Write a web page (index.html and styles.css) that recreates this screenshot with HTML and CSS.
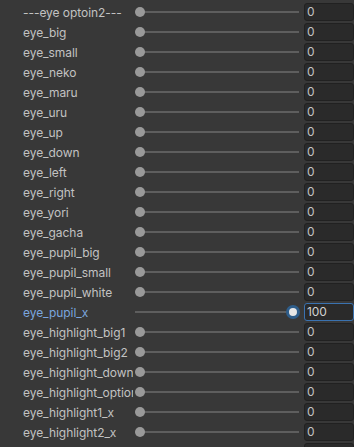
FILE: index.html
```html
<!DOCTYPE html>
<html>
<head>
<meta charset="utf-8">
<link rel="stylesheet" href="styles.css">
</head>
<body>
<div class="list">
  <div class="row"><span class="label">---eye optoin2---</span><div class="slider"><span class="track"></span><span class="knob"></span></div><div class="field">0</div></div>
  <div class="row"><span class="label">eye_big</span><div class="slider"><span class="track"></span><span class="knob"></span></div><div class="field">0</div></div>
  <div class="row"><span class="label">eye_small</span><div class="slider"><span class="track"></span><span class="knob"></span></div><div class="field">0</div></div>
  <div class="row"><span class="label">eye_neko</span><div class="slider"><span class="track"></span><span class="knob"></span></div><div class="field">0</div></div>
  <div class="row"><span class="label">eye_maru</span><div class="slider"><span class="track"></span><span class="knob"></span></div><div class="field">0</div></div>
  <div class="row"><span class="label">eye_uru</span><div class="slider"><span class="track"></span><span class="knob"></span></div><div class="field">0</div></div>
  <div class="row"><span class="label">eye_up</span><div class="slider"><span class="track"></span><span class="knob"></span></div><div class="field">0</div></div>
  <div class="row"><span class="label">eye_down</span><div class="slider"><span class="track"></span><span class="knob"></span></div><div class="field">0</div></div>
  <div class="row"><span class="label">eye_left</span><div class="slider"><span class="track"></span><span class="knob"></span></div><div class="field">0</div></div>
  <div class="row"><span class="label">eye_right</span><div class="slider"><span class="track"></span><span class="knob"></span></div><div class="field">0</div></div>
  <div class="row"><span class="label">eye_yori</span><div class="slider"><span class="track"></span><span class="knob"></span></div><div class="field">0</div></div>
  <div class="row"><span class="label">eye_gacha</span><div class="slider"><span class="track"></span><span class="knob"></span></div><div class="field">0</div></div>
  <div class="row"><span class="label">eye_pupil_big</span><div class="slider"><span class="track"></span><span class="knob"></span></div><div class="field">0</div></div>
  <div class="row"><span class="label">eye_pupil_small</span><div class="slider"><span class="track"></span><span class="knob"></span></div><div class="field">0</div></div>
  <div class="row"><span class="label">eye_pupil_white</span><div class="slider"><span class="track"></span><span class="knob"></span></div><div class="field">0</div></div>
  <div class="row active"><span class="label">eye_pupil_x</span><div class="slider max"><span class="track"></span><span class="knob"></span></div><div class="field">100</div></div>
  <div class="row"><span class="label">eye_highlight_big1</span><div class="slider"><span class="track"></span><span class="knob"></span></div><div class="field">0</div></div>
  <div class="row"><span class="label">eye_highlight_big2</span><div class="slider"><span class="track"></span><span class="knob"></span></div><div class="field">0</div></div>
  <div class="row"><span class="label">eye_highlight_down</span><div class="slider"><span class="track"></span><span class="knob"></span></div><div class="field">0</div></div>
  <div class="row"><span class="label">eye_highlight_option</span><div class="slider"><span class="track"></span><span class="knob"></span></div><div class="field">0</div></div>
  <div class="row"><span class="label">eye_highlight1_x</span><div class="slider"><span class="track"></span><span class="knob"></span></div><div class="field">0</div></div>
  <div class="row"><span class="label">eye_highlight2_x</span><div class="slider"><span class="track"></span><span class="knob"></span></div><div class="field">0</div></div>
  <div class="row"><span class="label"></span><div class="slider"><span class="track"></span><span class="knob"></span></div><div class="field"></div></div>
</div>
</body>
</html>
```

FILE: styles.css
```css
html, body {
  margin: 0;
  padding: 0;
  background: #383838;
  overflow: hidden;
  height: 447px;
}

.list {
  padding-top: 2px;
  font-family: Inter, "Noto Sans", sans-serif;
  font-size: 12px;
  letter-spacing: -0.05px;
  color: #c2c2c2;
}

.row {
  display: grid;
  grid-template-columns: 110px 166px 55px;
  column-gap: 0;
  height: 20px;
  align-items: center;
  padding-left: 23px;
}

.label {
  white-space: nowrap;
  overflow: hidden;
  line-height: 20px;
  padding-top: 1px;
  box-sizing: border-box;
  height: 20px;
}

.slider {
  position: relative;
  height: 20px;
  margin-left: 2px;
}

.track {
  position: absolute;
  left: 0;
  right: 0;
  top: 9px;
  height: 2px;
  background: #5e5e5e;
}

.knob {
  position: absolute;
  left: 0;
  top: 5px;
  width: 10px;
  height: 10px;
  border-radius: 50%;
  background: #999999;
}

.slider.max .track {
  right: 6px;
}

.slider.max .knob {
  left: auto;
  right: -1px;
  top: 3px;
  width: 8px;
  height: 8px;
  background: #e6e6e6;
  border: 3px solid #2e5d8a;
}

.field {
  box-sizing: border-box;
  height: 18px;
  margin-left: 5px;
  background: #2a2a2a;
  border: 1px solid #212121;
  border-radius: 3px;
  padding-left: 2px;
  line-height: 16px;
  color: #c2c2c2;
}

.active .label {
  color: #7ba6df;
}

.active .field {
  border-color: #3a72b0;
  color: #d2d2d2;
}
```
